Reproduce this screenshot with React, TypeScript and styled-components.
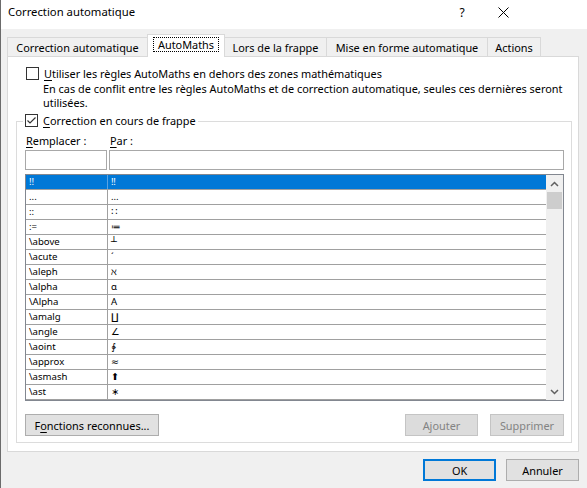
import styled, { createGlobalStyle } from "styled-components";

const GlobalStyle = createGlobalStyle`
  html, body {
    margin: 0;
    padding: 0;
    background: #f0f0f0;
  }
  body {
    font-family: "Noto Sans", "DejaVu Sans", sans-serif;
  }
`;

const Window = styled.div`
  width: 587px;
  height: 488px;
  box-sizing: border-box;
  border-left: 1px solid #6b6b6b;
  background: #f0f0f0;
  display: flex;
  flex-direction: column;
  font-family: "Noto Sans", "DejaVu Sans", sans-serif;
  font-size: 10.9px;
  color: #000;
  overflow: hidden;
`;

const TitleBar = styled.div`
  height: 29px;
  background: #fff;
  display: flex;
  align-items: flex-start;
  padding-right: 63px;
`;

const Title = styled.div`
  flex: 1;
  padding: 4px 0 0 7px;
  line-height: 16px;
  font-size: 11.3px;
`;

const Caption = styled.div<{ $w: number }>`
  width: ${(p) => p.$w}px;
  height: 24px;
  display: flex;
  align-items: center;
  justify-content: center;
  font-size: 12px;
`;

const TabStrip = styled.div`
  display: flex;
  align-items: flex-end;
  height: 22px;
  margin: 5px 0 0 6px;
  position: relative;
  z-index: 1;
`;

const Tab = styled.div<{ $w: number; $active?: boolean }>`
  width: ${(p) => p.$w}px;
  height: ${(p) => (p.$active ? 23 : 19)}px;
  box-sizing: border-box;
  margin-right: -1px;
  margin-bottom: ${(p) => (p.$active ? -1 : 0)}px;
  border: 1px solid #d9d9d9;
  border-bottom: none;
  background: ${(p) => (p.$active ? "#fff" : "#f0f0f0")};
  position: relative;
  z-index: ${(p) => (p.$active ? 2 : 1)};
  display: flex;
  align-items: center;
  justify-content: center;
  padding-bottom: ${(p) => (p.$active ? 3 : 0)}px;
  white-space: nowrap;
`;

const FocusRect = styled.span`
  border: 1px dotted #000;
  padding: 0 4px;
  line-height: 13px;
`;

const Panel = styled.div`
  margin: 0 8px 0 6px;
  background: #fff;
  border: 1px solid #d9d9d9;
  padding: 9px 6px 8px 8px;
`;

const OptionRow = styled.label`
  display: flex;
  align-items: center;
  gap: 5px;
  margin-left: 10px;
  line-height: 15px;
`;

const Box = styled.span`
  width: 13px;
  height: 13px;
  box-sizing: border-box;
  border: 1px solid #333;
  background: #fff;
  display: inline-flex;
  align-items: center;
  justify-content: center;
  flex: none;
`;

const Note = styled.div`
  margin: 1px 0 0 27px;
  line-height: 14px;
  white-space: nowrap;
`;

const Key = styled.u`
  text-decoration-thickness: 1px;
  text-underline-offset: 2px;
`;

const Group = styled.fieldset`
  margin: 3px 0 0 0;
  padding: 5px 7px 6px 8px;
  border: 1px solid #dcdcdc;
  min-width: 0;
`;

const GroupLegend = styled.legend`
  padding: 0 2px;
  margin-left: -2px;
  line-height: 15px;
`;

const LegendLabel = styled.label`
  display: inline-flex;
  align-items: center;
  gap: 5px;
`;

const FieldGrid = styled.div`
  display: grid;
  grid-template-columns: 82px 1fr;
  column-gap: 2px;
`;

const FieldLabel = styled.div`
  line-height: 14px;
  padding: 0 0 2px 1px;
`;

const TextInput = styled.div`
  height: 20px;
  box-sizing: border-box;
  border: 1px solid #a8a8a8;
  background: #fff;
`;

const ListBox = styled.div`
  margin-top: 4px;
  border: 1px solid #828790;
  display: grid;
  grid-template-columns: 1fr 17px;
  height: 225px;
  background: #fff;
`;

const Rows = styled.div`
  display: flex;
  flex-direction: column;
  overflow: hidden;
`;

const Row = styled.div<{ $selected?: boolean }>`
  display: grid;
  grid-template-columns: 82px 1fr;
  height: 15px;
  flex: none;
  box-sizing: border-box;
  border-bottom: 1px solid #a0a0a0;
  background: ${(p) => (p.$selected ? "#0078d7" : "transparent")};
  color: ${(p) => (p.$selected ? "#fff" : "#000")};
`;

const Cell = styled.div<{ $first?: boolean; $selected?: boolean }>`
  padding-left: 3px;
  line-height: 14px;
  font-size: 9.6px;
  white-space: nowrap;
  overflow: hidden;
  border-right: ${(p) =>
    p.$first ? `1px solid ${p.$selected ? "#5aa3e3" : "#a0a0a0"}` : "none"};
`;

const ScrollBar = styled.div`
  background: #f0f0f0;
  display: flex;
  flex-direction: column;
`;

const ScrollArrow = styled.div`
  height: 17px;
  display: flex;
  align-items: center;
  justify-content: center;
  flex: none;
`;

const Thumb = styled.div`
  height: 17px;
  margin: 0 1px;
  background: #cdcdcd;
  flex: none;
`;

const Track = styled.div`
  flex: 1;
`;

const ButtonRow = styled.div`
  display: flex;
  align-items: center;
  gap: 12px;
  margin-top: 13px;
`;

const Button = styled.button<{ $w: number; $default?: boolean }>`
  width: ${(p) => p.$w}px;
  height: 22px;
  box-sizing: border-box;
  padding: 0;
  font-family: inherit;
  font-size: 10.9px;
  color: #000;
  background: #e1e1e1;
  border: ${(p) => (p.$default ? "2px solid #0078d7" : "1px solid #adadad")};

  &:disabled {
    color: #838383;
    background: #dcdcdc;
    border-color: #c4c4c4;
  }
`;

const Spacer = styled.div`
  flex: 1;
`;

const Footer = styled.div`
  display: flex;
  justify-content: flex-end;
  gap: 10px;
  padding: 7px 8px 0 0;
`;

const entries: [string, string][] = [
  ["!!", "‼"],
  ["...", "…"],
  ["::", "∷"],
  [":=", "≔"],
  ["\\above", "┴"],
  ["\\acute", "´"],
  ["\\aleph", "ℵ"],
  ["\\alpha", "α"],
  ["\\Alpha", "Α"],
  ["\\amalg", "∐"],
  ["\\angle", "∠"],
  ["\\aoint", "∳"],
  ["\\approx", "≈"],
  ["\\asmash", "⬆"],
  ["\\ast", "∗"],
];

function Checkbox({ checked }: { checked?: boolean }) {
  return (
    <Box>
      {checked && (
        <svg width="11" height="11" viewBox="0 0 11 11">
          <polyline points="1.5,5.5 4,8 9.5,2.5" fill="none" stroke="#333" strokeWidth="1.2" />
        </svg>
      )}
    </Box>
  );
}

function Chevron({ up }: { up?: boolean }) {
  return (
    <svg width="9" height="6" viewBox="0 0 9 6">
      <polyline
        points={up ? "1,5 4.5,1.5 8,5" : "1,1 4.5,4.5 8,1"}
        fill="none"
        stroke="#606060"
        strokeWidth="1.5"
      />
    </svg>
  );
}

export default function App() {
  return (
    <Window>
      <GlobalStyle />
      <TitleBar>
        <Title>Correction automatique</Title>
        <Caption $w={40}>?</Caption>
        <Caption $w={42}>
          <svg width="11" height="11" viewBox="0 0 11 11">
            <path d="M0.5 0.5 L10.5 10.5 M10.5 0.5 L0.5 10.5" stroke="#000" strokeWidth="1" />
          </svg>
        </Caption>
      </TitleBar>

      <TabStrip>
        <Tab $w={141}>Correction automatique</Tab>
        <Tab $w={78} $active>
          <FocusRect>AutoMaths</FocusRect>
        </Tab>
        <Tab $w={103}>Lors de la frappe</Tab>
        <Tab $w={162}>Mise en forme automatique</Tab>
        <Tab $w={54}>Actions</Tab>
      </TabStrip>

      <Panel>
        <OptionRow>
          <Checkbox />
          <span>
            <Key>U</Key>tiliser les règles AutoMaths en dehors des zones mathématiques
          </span>
        </OptionRow>
        <Note>
          En cas de conflit entre les règles AutoMaths et de correction automatique, seules ces dernières seront
          <br />
          utilisées.
        </Note>

        <Group>
          <GroupLegend>
            <LegendLabel>
              <Checkbox checked />
              <span>
                <Key>C</Key>orrection en cours de frappe
              </span>
            </LegendLabel>
          </GroupLegend>

          <FieldGrid>
            <FieldLabel>
              <Key>R</Key>emplacer :
            </FieldLabel>
            <FieldLabel>
              <Key>P</Key>ar :
            </FieldLabel>
            <TextInput />
            <TextInput />
          </FieldGrid>

          <ListBox>
            <Rows>
              {entries.map(([from, to], i) => (
                <Row key={from} $selected={i === 0}>
                  <Cell $first $selected={i === 0}>
                    {from}
                  </Cell>
                  <Cell>{to}</Cell>
                </Row>
              ))}
            </Rows>
            <ScrollBar>
              <ScrollArrow>
                <Chevron up />
              </ScrollArrow>
              <Thumb />
              <Track />
              <ScrollArrow>
                <Chevron />
              </ScrollArrow>
            </ScrollBar>
          </ListBox>

          <ButtonRow>
            <Button $w={134}>
              F<Key>o</Key>nctions reconnues...
            </Button>
            <Spacer />
            <Button $w={73} disabled>
              Ajouter
            </Button>
            <Button $w={74} disabled>
              Supprimer
            </Button>
          </ButtonRow>
        </Group>
      </Panel>

      <Footer>
        <Button $w={73} $default>
          OK
        </Button>
        <Button $w={73}>Annuler</Button>
      </Footer>
    </Window>
  );
}
